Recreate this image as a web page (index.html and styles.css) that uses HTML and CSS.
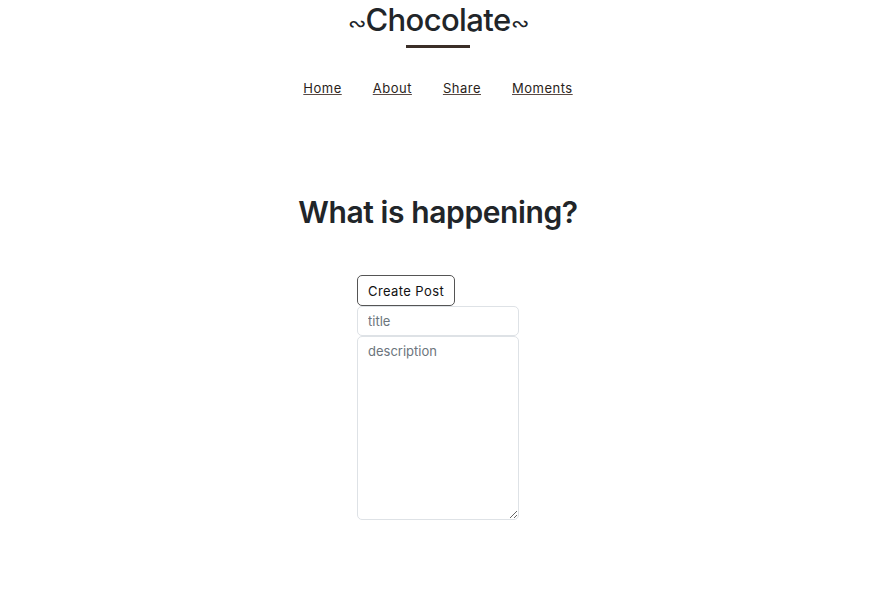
FILE: index.html
```html
<!DOCTYPE html>
<html>
<head>
<meta charset="utf-8">
<link rel="stylesheet" href="styles.css">
</head>
<body>
<header class="site-header">
  <h1 class="brand"><span class="squiggle">∾</span>Chocolate<span class="squiggle">∾</span></h1>
  <div class="brand-bar"></div>
  <nav class="nav">
    <a href="#">Home</a>
    <a href="#">About</a>
    <a href="#">Share</a>
    <a href="#">Moments</a>
  </nav>
</header>
<main class="main">
  <h2 class="headline">What is happening?</h2>
  <form class="post-form">
    <button type="button" class="btn">Create Post</button>
    <input class="field" type="text" placeholder="title">
    <textarea class="field area" placeholder="description"></textarea>
  </form>
</main>
</body>
</html>
```
FILE: styles.css
```css
* { box-sizing: border-box; }
body {
  margin: 0;
  padding-right: 8px;
  font-family: Inter, "Noto Sans", sans-serif;
  color: #212529;
  background: #fff;
}
.site-header {
  display: flex;
  flex-direction: column;
  align-items: center;
}
.brand {
  margin: 0;
  font-size: 31px;
  font-weight: 500;
  line-height: 40px;
  letter-spacing: -0.6px;
}
.squiggle {
  font-size: 22px;
  font-weight: 400;
}
.brand-bar {
  width: 64px;
  height: 3px;
  background: #3b2e28;
  margin-top: 2px;
}
.nav {
  display: flex;
  gap: 31px;
  margin-top: 32px;
}
.nav a {
  font-size: 13px;
  letter-spacing: 0.5px;
  color: #2a1e1a;
  text-decoration: underline;
  text-decoration-color: #5a4a44;
}
.main {
  display: flex;
  flex-direction: column;
  align-items: center;
}
.headline {
  margin: 96px 0 0;
  font-size: 30px;
  font-weight: 600;
  line-height: 40px;
  letter-spacing: -0.4px;
}
.post-form {
  display: flex;
  flex-direction: column;
  align-items: flex-start;
  width: 162px;
  margin-top: 43px;
}
.btn {
  font-family: inherit;
  font-size: 13px;
  letter-spacing: 0.4px;
  color: #111;
  background: #fff;
  border: 1px solid #555;
  border-radius: 5px;
  height: 31px;
  padding: 0 10px;
}
.field {
  width: 162px;
  font-family: inherit;
  font-size: 13px;
  border: 1px solid #dee2e6;
  border-radius: 5px;
  padding: 6px 10px;
  color: #212529;
}
.field::placeholder { color: #6c757d; }
input.field { height: 30px; }
.area { height: 184px; resize: vertical; }
```
